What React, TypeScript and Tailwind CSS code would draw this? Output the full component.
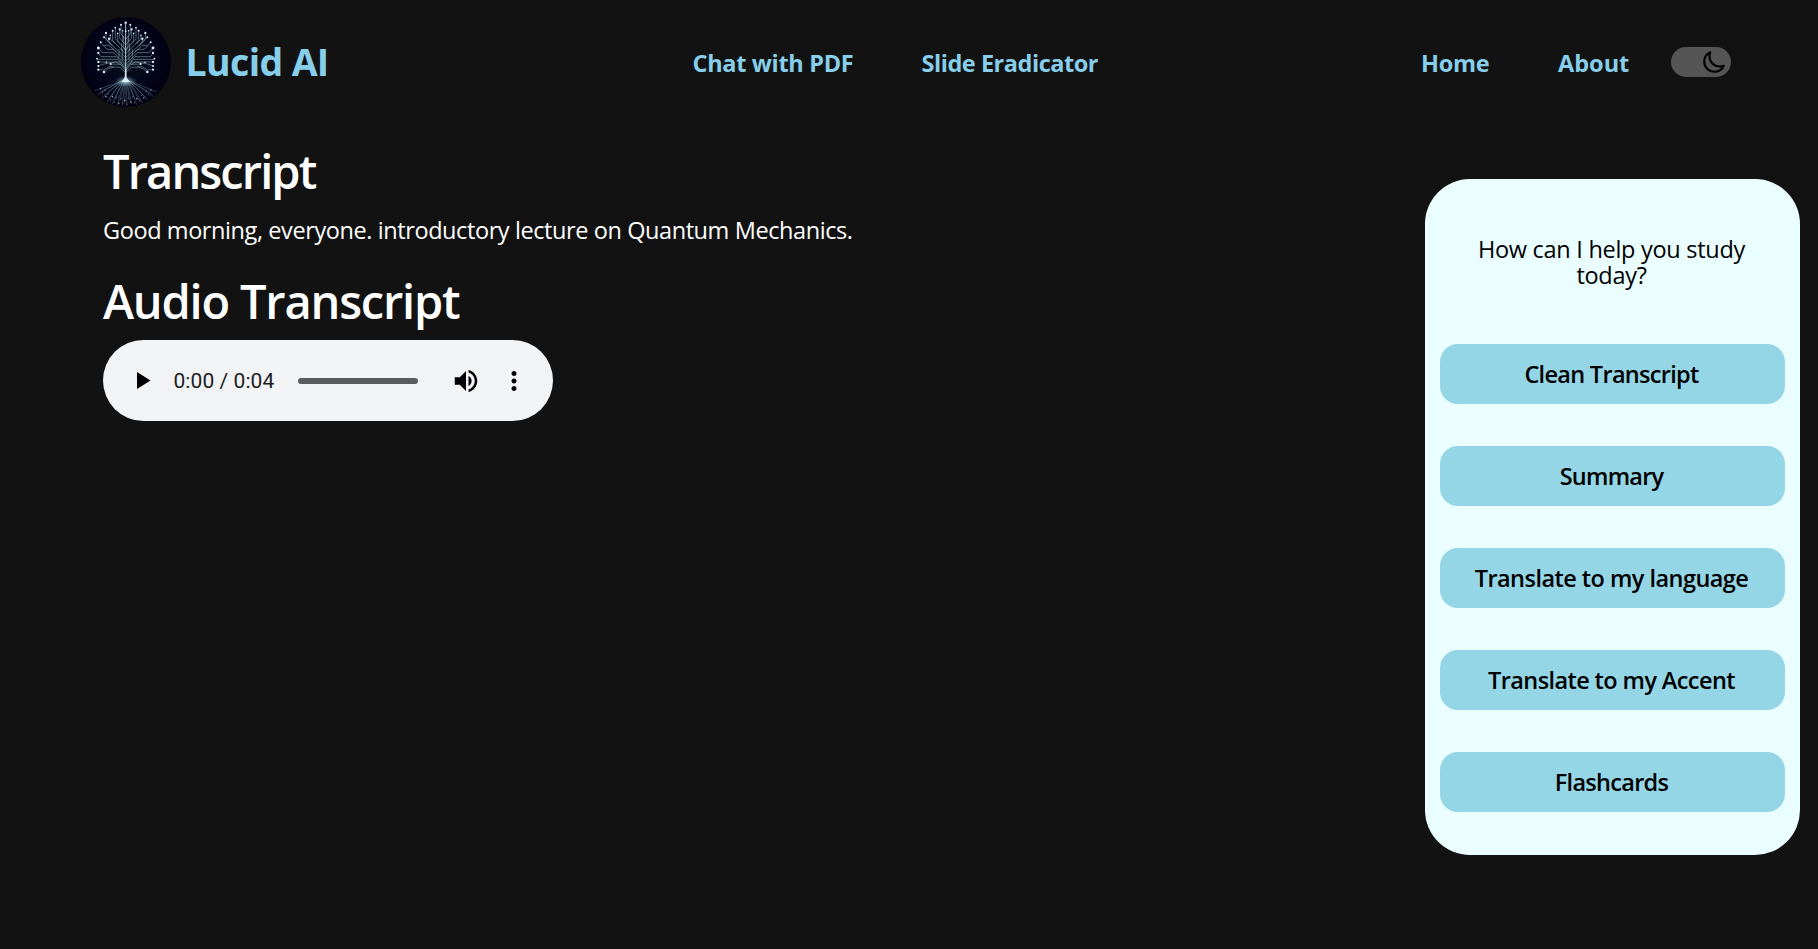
import type { ReactNode } from "react";

// One side of the circuit tree; the other side is mirrored around the trunk.
const branches: number[][][] = [
  [[0, 92], [-14, 76], [-14, 48]],
  [[0, 108], [-18, 88], [-18, 62]],
  [[-9, 99], [-9, 66]],
  [[0, 124], [-31, 90], [-31, 57]],
  [[-18, 104], [-24, 96], [-24, 74]],
  [[0, 136], [-39, 96], [-39, 66]],
  [[-31, 104], [-46, 92], [-46, 80]],
  [[0, 147], [-50, 102], [-50, 90]],
  [[-39, 111], [-59, 92], [-59, 73]],
  [[-44, 106], [-65, 86]],
  [[0, 157], [-36, 122], [-56, 122], [-75, 101]],
  [[-28, 130], [-50, 110], [-66, 110]],
  [[0, 166], [-36, 132], [-70, 132], [-82, 118]],
  [[0, 172], [-28, 144], [-74, 144], [-82, 133]],
  [[0, 178], [-24, 152], [-86, 152]],
  [[-10, 156], [-10, 120]],
  [[-20, 146], [-20, 122]],
  [[0, 182], [-18, 160], [-72, 160], [-82, 160]],
  [[0, 186], [-16, 167], [-45, 166]],
  [[-16, 167], [-30, 160], [-66, 166], [-82, 172]],
  [[0, 192], [-17, 176], [-50, 174], [-65, 184], [-82, 183]],
  [[-35, 175], [-52, 180], [-65, 190]],
  [[0, 128], [-7, 112], [-7, 82]],
  [[-12, 126], [-12, 104]],
];

const nodes: number[][] = [
  [-14, 48, 3], [-18, 62, 3.4], [-31, 57, 2.6], [-39, 66, 3], [-59, 73, 3.4], [-50, 90, 3.6],
  [-65, 86, 3], [-75, 101, 3], [-82, 118, 4.4], [-82, 133, 3.4], [-86, 150, 2.6], [-82, 160, 3.4],
  [-82, 172, 3], [-82, 183, 3.2], [-65, 190, 3.8], [-45, 166, 3.2], [-46, 80, 2.4], [-24, 74, 2.4],
  [-9, 66, 2.2], [-58, 161, 2.2],
];

const roots: number[][] = [
  [-92, 246], [-84, 258], [-76, 250], [-72, 270], [-64, 262], [-56, 280], [-48, 270], [-40, 286],
  [-32, 272], [-25, 290], [-17, 276], [-10, 288], [-3, 282], [4, 292], [11, 274], [18, 286],
  [26, 270], [33, 288], [41, 276], [50, 282], [58, 266], [66, 274], [75, 254], [84, 264], [92, 250],
];

function TreeLogo() {
  const half = (
    <>
      {branches.map((b, i) => (
        <polyline key={i} points={b.map((p) => p.join(",")).join(" ")} />
      ))}
    </>
  );
  const dots = nodes.map(([x, y, r], i) => <circle key={i} cx={x} cy={y} r={r} />);
  return (
    <svg viewBox="33 25 270 270" className="size-[90px] rounded-full" aria-hidden="true">
      <defs>
        <radialGradient id="sky" cx="50%" cy="48%" r="52%">
          <stop offset="0" stopColor="#07101c" />
          <stop offset="0.7" stopColor="#03041a" />
          <stop offset="1" stopColor="#020110" />
        </radialGradient>
        <radialGradient id="glow">
          <stop offset="0" stopColor="#e6fbff" stopOpacity="0.95" />
          <stop offset="0.35" stopColor="#a5d3e0" stopOpacity="0.5" />
          <stop offset="1" stopColor="#6fa2b5" stopOpacity="0" />
        </radialGradient>
      </defs>
      <rect x="33" y="25" width="270" height="270" fill="url(#sky)" />
      <g transform="translate(167 0)">
        <g fill="none" stroke="#9dbdc9" strokeWidth="2" strokeOpacity="0.75">
          {half}
          <g transform="scale(-1 1)">{half}</g>
        </g>
        <path d="M0 44V212" stroke="#c5e3ea" strokeWidth="2.6" />
        <g fill="none" stroke="#8fb2c2" strokeWidth="1.6" strokeOpacity="0.6">
          {roots.map(([x, y], i) => (
            <path key={i} d={`M0 212Q${x * 0.4} 226 ${x} ${y}`} />
          ))}
        </g>
        <ellipse cx="0" cy="218" rx="34" ry="17" fill="url(#glow)" />
        <path d="M-2 180L-3 206L-12 220H12L3 206L2 180Z" fill="#dff6fa" fillOpacity="0.85" />
        <g fill="#dcf0f5">
          {dots}
          <g transform="scale(-1 1)">{dots}</g>
          <circle cx="0" cy="42" r="3.6" />
          <circle cx="0" cy="68" r="2.6" />
        </g>
        <g fill="#a9c6d3" fillOpacity="0.8">
          {roots.map(([x, y], i) => (
            <circle key={i} cx={x * 0.82} cy={y - 6} r={i % 3 === 0 ? 2.4 : 1.6} />
          ))}
        </g>
      </g>
    </svg>
  );
}

function NavLink({ className, children }: { className: string; children: ReactNode }) {
  return (
    <a href="#" className={`block pt-[2px] text-[23.5px] leading-9 font-bold whitespace-nowrap ${className}`}>
      {children}
    </a>
  );
}

function ThemeToggle() {
  return (
    <button aria-label="Toggle theme" className="flex h-[30px] w-[60px] items-center justify-end rounded-full bg-[#555555] pr-[5px]">
      <svg viewBox="0 0 512 512" className="size-6" fill="none" stroke="#000" strokeWidth="46" strokeLinecap="round" strokeLinejoin="round">
        <path d="M160 136c0-30.62 4.51-61.61 16-88C99.57 81.27 48 159.32 48 248c0 119.29 96.71 216 216 216 88.68 0 166.73-51.57 200-128-26.39 11.49-57.38 16-88 16-119.29 0-216-96.71-216-216z" />
      </svg>
    </button>
  );
}

function AudioPlayer() {
  return (
    <div className="mt-[15px] flex h-[81px] w-[450px] items-center rounded-full bg-[#f1f3f4] pl-[34px]">
      <svg viewBox="0 0 14 17" className="h-[17px] w-[14px]">
        <path d="M0 0V17L13.5 8.5Z" fill="#000" />
      </svg>
      <span className="ml-[22.5px] w-[124.5px] font-['Roboto',sans-serif] text-[21px] leading-6 tracking-[0.07px] whitespace-nowrap text-[#202124]">
        0:00 / 0:04
      </span>
      <div className="h-[6px] w-[120px] rounded-full bg-[#5b5c5d]" />
      <svg viewBox="0 0 24 24" className="ml-[33px] size-[30px]">
        <path
          fill="#000"
          d="M3 9v6h4l5 5V4L7 9H3zm13.5 3c0-1.77-1.02-3.29-2.5-4.03v8.05c1.48-.73 2.5-2.25 2.5-4.02zM14 3.23v2.06c2.89.86 5 3.54 5 6.71s-2.11 5.85-5 6.71v2.06c4.01-.91 7-4.49 7-8.77s-2.99-7.86-7-8.77z"
        />
      </svg>
      <svg viewBox="0 0 24 24" className="ml-[18px] size-[30px]">
        <path
          fill="#000"
          d="M12 8c1.1 0 2-.9 2-2s-.9-2-2-2-2 .9-2 2 .9 2 2 2zm0 2c-1.1 0-2 .9-2 2s.9 2 2 2 2-.9 2-2-.9-2-2-2zm0 6c-1.1 0-2 .9-2 2s.9 2 2 2 2-.9 2-2-.9-2-2-2z"
        />
      </svg>
    </div>
  );
}

const actions = [
  { label: "Clean Transcript", tracking: "tracking-[-0.7px]" },
  { label: "Summary", tracking: "tracking-[-0.78px]" },
  { label: "Translate to my language", tracking: "tracking-[-0.54px]" },
  { label: "Translate to my Accent", tracking: "tracking-[-0.6px]" },
  { label: "Flashcards", tracking: "tracking-[-0.72px]" },
];

function StudyPanel() {
  return (
    <aside className="mt-[55px] mr-[18px] ml-auto h-[676px] w-[375px] rounded-[45px] bg-[#eafdff] px-[15px] pt-[57px] text-black">
      <p className="px-8 pr-[34px] text-center text-[23.5px] leading-[26px] tracking-[-0.28px]">How can I help you study today?</p>
      <div className="mt-[56px] flex flex-col gap-[42px]">
        {actions.map((a) => (
          <button key={a.label} className={`h-[60px] w-full rounded-[18px] bg-[#94d6e6] pt-[2px] pr-[2px] text-[23.5px] font-semibold ${a.tracking}`}>
            {a.label}
          </button>
        ))}
      </div>
    </aside>
  );
}

export default function App() {
  return (
    <div className="h-screen overflow-hidden bg-[#121212] font-['Open_Sans',sans-serif] text-white">
      <header className="grid h-[124px] grid-cols-[611.5px_229px_499.5px_137px_113px_60px] items-center pl-[81px] text-[#87ceeb]">
        <div className="flex items-center gap-[14.5px]">
          <TreeLogo />
          <span className="text-[37.5px] leading-[48px] font-bold tracking-[-0.65px]">Lucid AI</span>
        </div>
        <NavLink className="tracking-[-0.32px]">Chat with PDF</NavLink>
        <NavLink className="tracking-[-0.46px]">Slide Eradicator</NavLink>
        <NavLink className="tracking-[-0.3px]">Home</NavLink>
        <NavLink className="tracking-[0px]">About</NavLink>
        <ThemeToggle />
      </header>
      <main className="flex items-start pl-[103px]">
        <section className="pt-[23px]">
          <h1 className="text-[47px] leading-[48px] font-semibold tracking-[-1.9px]">Transcript</h1>
          <p className="mt-[17px] text-[23.5px] leading-9 tracking-[-0.41px]">
            Good morning, everyone. introductory lecture on Quantum Mechanics.
          </p>
          <h1 className="mt-[29px] text-[47px] leading-[48px] font-semibold tracking-[-1.2px]">Audio Transcript</h1>
          <AudioPlayer />
        </section>
        <StudyPanel />
      </main>
    </div>
  );
}
